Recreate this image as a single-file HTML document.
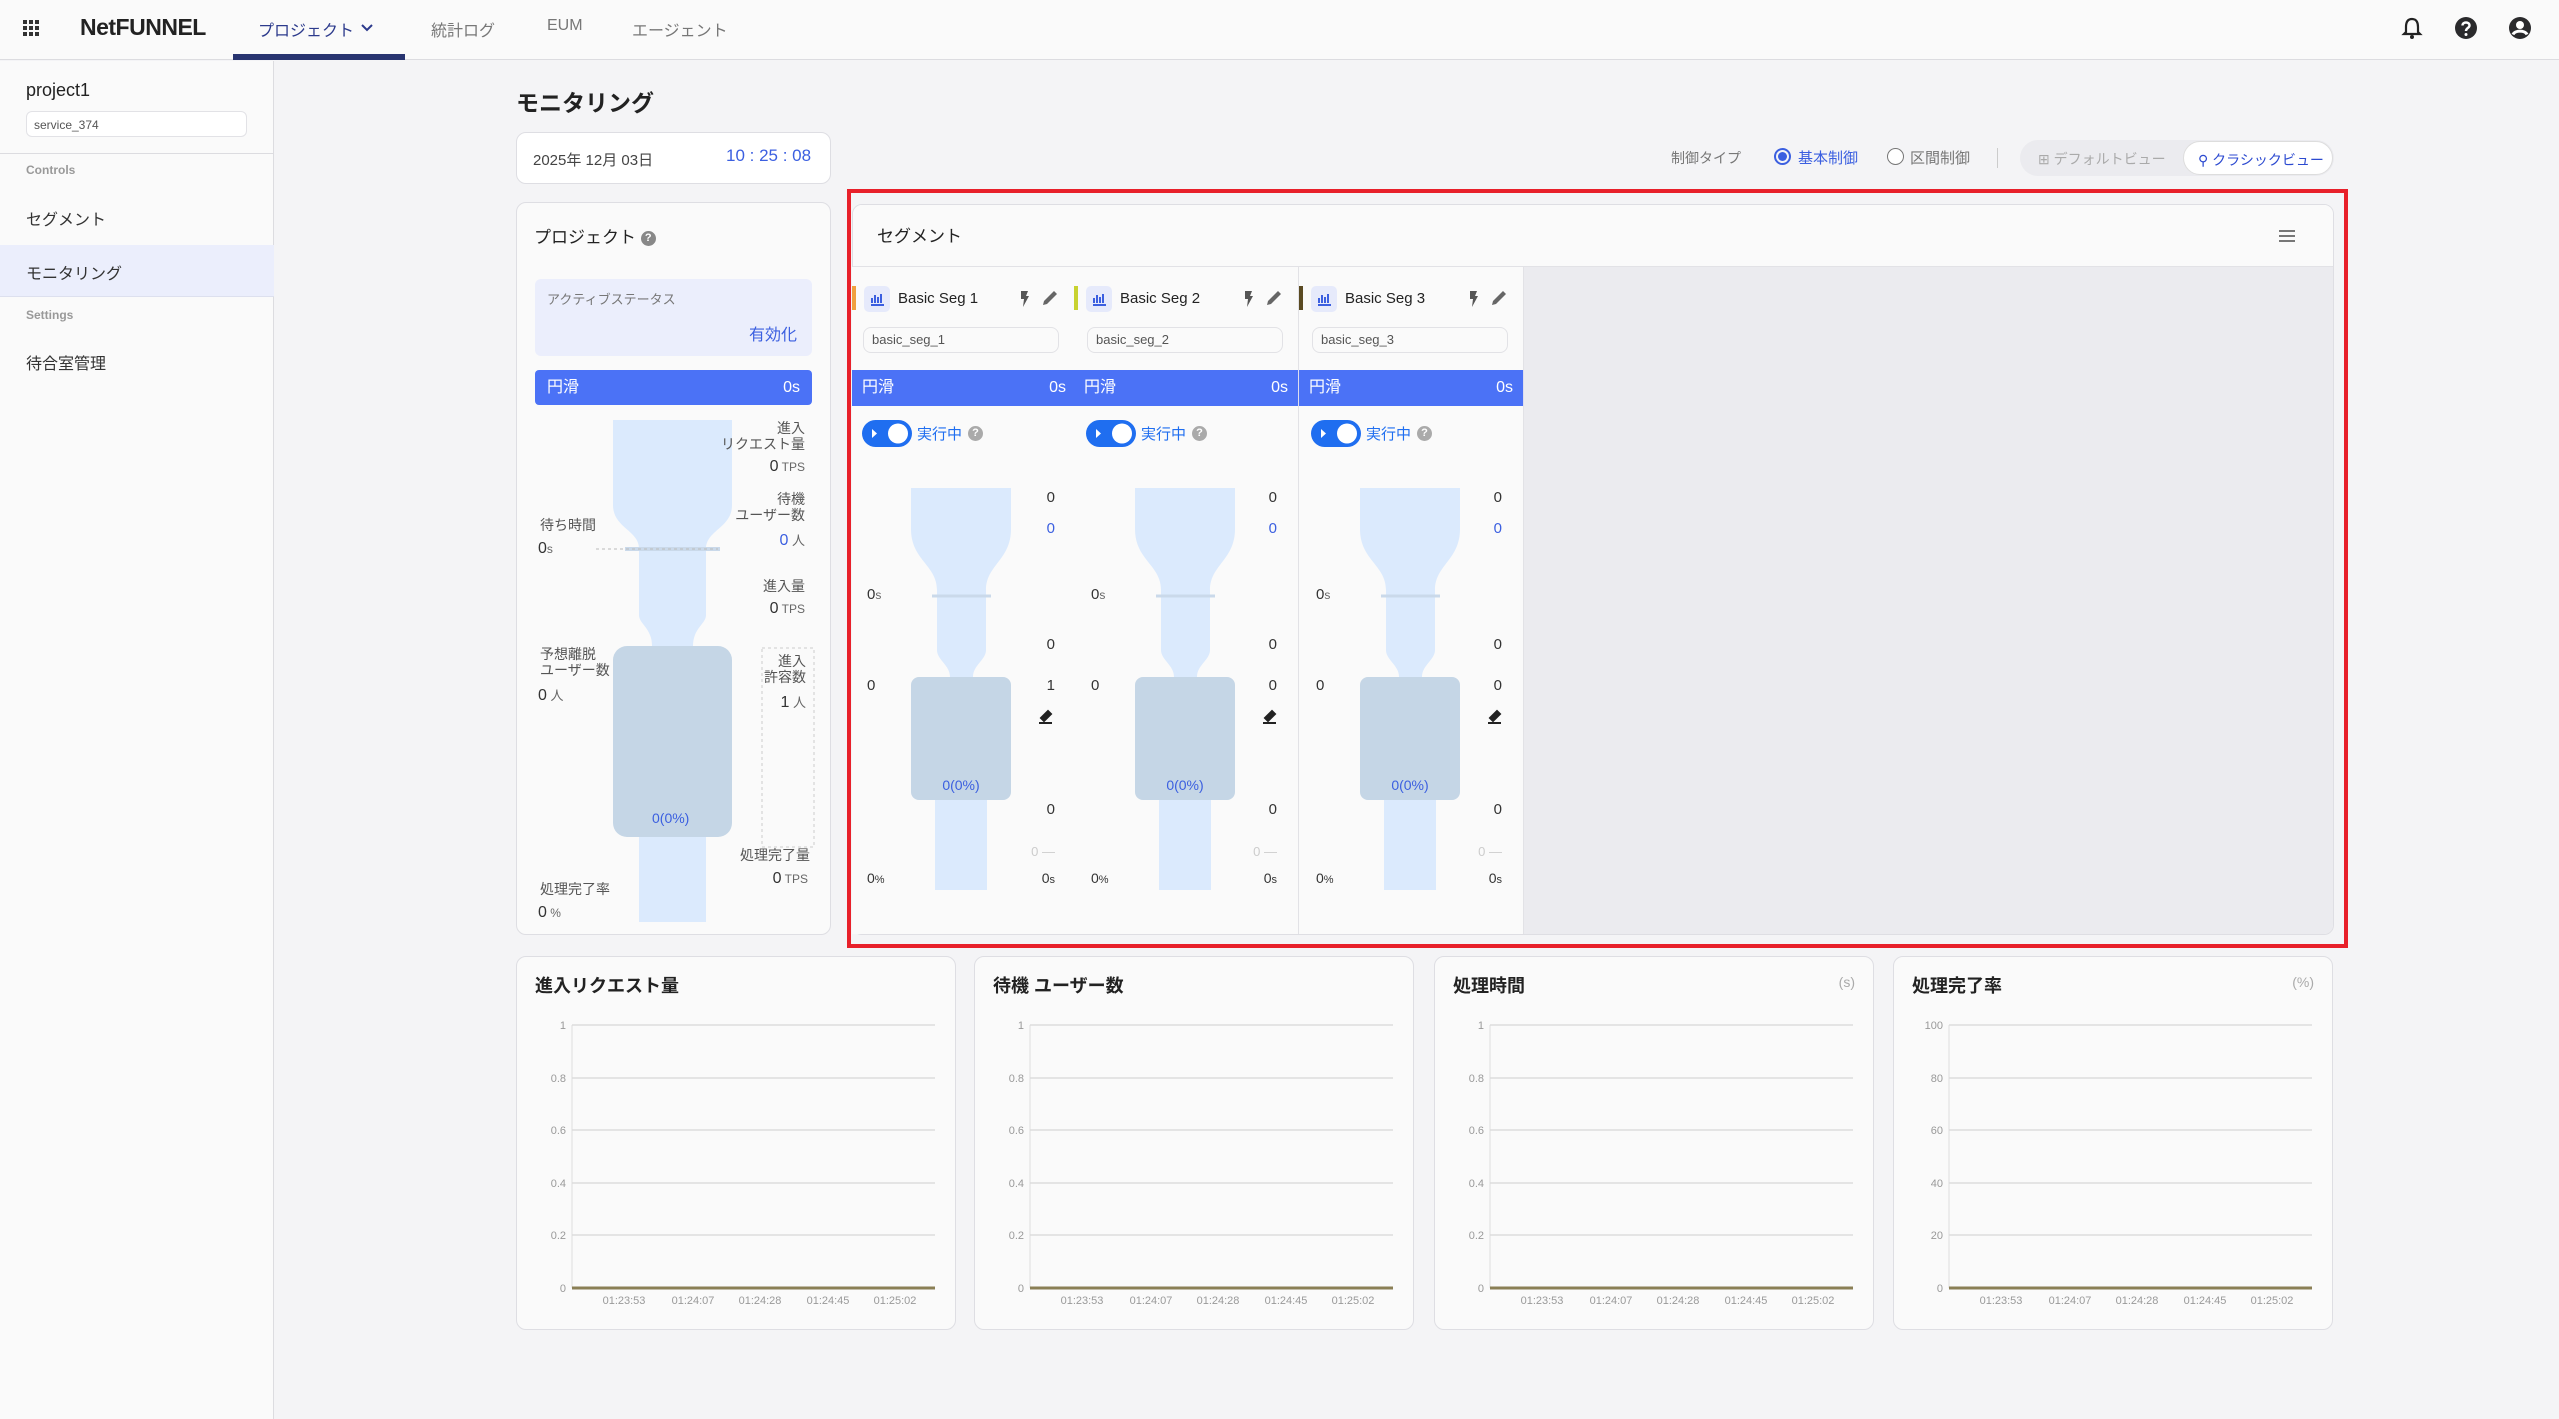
<!DOCTYPE html>
<html><head><meta charset="utf-8">
<style>
*{margin:0;padding:0;box-sizing:border-box}
body{width:2559px;height:1419px;overflow:hidden;background:#f4f4f6;font-family:"Liberation Sans","Noto Sans CJK JP",sans-serif;color:#333;position:relative}
.a{position:absolute;white-space:nowrap}
.r{text-align:right}
.blue{color:#3b5fe0}
.g{color:#777}
.card{position:absolute;background:#fafafa;border:1px solid #dedee3;border-radius:10px}
.bar{position:absolute;background:#4b72f6;color:#fff;font-size:16px;line-height:35px}
.lbl{font-size:14px;color:#555;line-height:16px}
.ct{font-size:11px;color:#999}
</style></head><body>
<!-- header -->
<div class="a" style="left:0;top:0;width:2559px;height:60px;background:#fafafa;border-bottom:1px solid #dcdce0"></div>
<svg class="a" style="left:23px;top:20px" width="17" height="17" viewBox="0 0 17 17" fill="#333"><rect x="0" y="0" width="4" height="4"/><rect x="6" y="0" width="4" height="4"/><rect x="12" y="0" width="4" height="4"/><rect x="0" y="6" width="4" height="4"/><rect x="6" y="6" width="4" height="4"/><rect x="12" y="6" width="4" height="4"/><rect x="0" y="12" width="4" height="4"/><rect x="6" y="12" width="4" height="4"/><rect x="12" y="12" width="4" height="4"/></svg>
<div class="a" style="left:80px;top:14px;font-size:23px;font-weight:bold;color:#222;letter-spacing:-0.5px">NetFUNNEL</div>
<div class="a" style="left:258px;top:17px;font-size:16px;color:#2c3a8c">プロジェクト</div>
<svg class="a" style="left:360px;top:23px" width="14" height="10" viewBox="0 0 14 10"><path d="M2 2 L7 7 L12 2" stroke="#2c3a8c" stroke-width="2" fill="none"/></svg>
<div class="a" style="left:233px;top:54px;width:172px;height:6px;background:#283470"></div>
<div class="a g" style="left:431px;top:17px;font-size:16px">統計ログ</div>
<div class="a g" style="left:547px;top:17px;font-size:16px">EUM</div>
<div class="a g" style="left:632px;top:17px;font-size:16px">エージェント</div>
<svg class="a" style="left:2401px;top:16px" width="22" height="24" viewBox="0 0 22 24"><path d="M11 3 C6 3 5 7 5 11 V16 L3 18 H19 L17 16 V11 C17 7 16 3 11 3Z" fill="none" stroke="#222" stroke-width="2.2"/><circle cx="11" cy="21" r="2" fill="#222"/></svg>
<svg class="a" style="left:2454px;top:16px" width="24" height="24" viewBox="0 0 24 24"><circle cx="12" cy="12" r="11" fill="#2a2a2c"/><path d="M8.5 9.5 C8.5 5.5 15.5 5.5 15.5 9.5 C15.5 12 12 12 12 15" stroke="#fff" stroke-width="2.4" fill="none"/><circle cx="12" cy="18.5" r="1.5" fill="#fff"/></svg>
<svg class="a" style="left:2508px;top:16px" width="24" height="24" viewBox="0 0 24 24"><circle cx="12" cy="12" r="11" fill="#2a2a2c"/><circle cx="12" cy="9" r="4" fill="#fff"/><path d="M5 18.5 C7 14 17 14 19 18.5" stroke="#fff" stroke-width="3" fill="none"/></svg>
<!-- sidebar -->
<div class="a" style="left:0;top:61px;width:274px;height:1358px;background:#fafafa;border-right:1px solid #dcdce0"></div>
<div class="a" style="left:26px;top:80px;font-size:18px;color:#222">project1</div>
<div class="a" style="left:26px;top:111px;width:221px;height:26px;border:1px solid #e2e2e6;border-radius:6px;background:#fff;font-size:12px;color:#555;padding:6px 7px">service_374</div>
<div class="a" style="left:0;top:153px;width:274px;height:1px;background:#dcdce0"></div>
<div class="a" style="left:26px;top:163px;font-size:12px;color:#999;font-weight:bold">Controls</div>
<div class="a" style="left:26px;top:206px;font-size:16px;color:#333">セグメント</div>
<div class="a" style="left:0;top:245px;width:274px;height:52px;background:#ebeefc;border-bottom:1px solid #dde0ee"></div>
<div class="a" style="left:26px;top:260px;font-size:16px;color:#333">モニタリング</div>
<div class="a" style="left:26px;top:308px;font-size:12px;color:#999;font-weight:bold">Settings</div>
<div class="a" style="left:26px;top:350px;font-size:16px;color:#333">待合室管理</div>
<!-- title -->
<div class="a" style="left:516px;top:84px;font-size:23px;font-weight:bold;color:#222">モニタリング</div>
<div class="card" style="left:516px;top:132px;width:315px;height:52px;background:#fff"></div>
<div class="a" style="left:533px;top:149px;font-size:15px;color:#444">2025年 12月 03日</div>
<div class="a blue" style="left:726px;top:146px;font-size:17px">10 : 25 : 08</div>
<!-- controls -->
<div class="a g" style="left:1671px;top:148px;font-size:14px">制御タイプ</div>
<div class="a" style="left:1774px;top:148px;width:17px;height:17px;border:2px solid #3b5fe0;border-radius:50%"><div style="margin:2px;width:9px;height:9px;border-radius:50%;background:#3b5fe0"></div></div>
<div class="a blue" style="left:1798px;top:147px;font-size:15px">基本制御</div>
<div class="a" style="left:1887px;top:148px;width:17px;height:17px;border:1.5px solid #777;border-radius:50%;background:#fff"></div>
<div class="a g" style="left:1910px;top:147px;font-size:15px">区間制御</div>
<div class="a" style="left:1997px;top:148px;width:1px;height:20px;background:#ccc"></div>
<div class="a" style="left:2020px;top:140px;width:314px;height:36px;background:#ebebef;border-radius:18px"></div>
<div class="a" style="left:2038px;top:149px;font-size:14px;color:#aaa">⊞ デフォルトビュー</div>
<div class="a" style="left:2183px;top:141px;width:150px;height:34px;background:#fff;border:1px solid #ddd;border-radius:17px;font-size:14px;color:#2c4ad0;padding:8px 0 0 14px">⚲ クラシックビュー</div>
<!-- project card -->
<div class="card" style="left:516px;top:202px;width:315px;height:733px"></div>
<div class="a" style="left:534px;top:223px;font-size:17px;color:#222">プロジェクト <span style="display:inline-block;width:15px;height:15px;border-radius:50%;background:#888;color:#fff;font-size:11px;text-align:center;line-height:15px;font-weight:bold;vertical-align:2px">?</span></div>
<div class="a" style="left:535px;top:279px;width:277px;height:77px;background:#ebeefc;border-radius:6px"></div>
<div class="a lbl" style="left:547px;top:292px;font-size:13px;color:#777">アクティブステータス</div>
<div class="a blue" style="left:749px;top:321px;font-size:16px">有効化</div>
<div class="bar" style="left:535px;top:370px;width:277px;height:35px;border-radius:4px;padding:0 12px">円滑<span style="float:right">0s</span></div>
<svg class="a" style="left:0;top:0" width="840" height="940">
<path d="M613 420 H732 V505 C732 528 706 530 706 549 V615 C706 624 693 628 693 646 H652 C652 628 639 624 639 615 V549 C639 530 613 528 613 505 Z" fill="#dbeafd"/>
<line x1="625" y1="549" x2="720" y2="549" stroke="#cad9ea" stroke-width="4"/>
<line x1="596" y1="549" x2="718" y2="549" stroke="#bbb" stroke-width="1" stroke-dasharray="3 3"/>
<rect x="613" y="646" width="119" height="191" rx="14" fill="#c5d6e6"/>
<rect x="639" y="837" width="67" height="85" fill="#dbeafd"/>
<rect x="762" y="648" width="52" height="199" fill="none" stroke="#ccc" stroke-dasharray="3 3"/>
</svg>
<div class="a lbl r" style="left:700px;top:420px;width:105px">進入<br>リクエスト量</div>
<div class="a r" style="left:700px;top:458px;width:105px;font-size:16px;color:#333">0<span style="font-size:12px;color:#666"> TPS</span></div>
<div class="a lbl r" style="left:700px;top:491px;width:105px">待機<br>ユーザー数</div>
<div class="a r blue" style="left:700px;top:530px;width:105px;font-size:16px">0<span style="font-size:13px;color:#666"> 人</span></div>
<div class="a lbl" style="left:540px;top:517px">待ち時間</div>
<div class="a" style="left:538px;top:540px;font-size:16px">0<span style="font-size:12px;color:#666">s</span></div>
<div class="a lbl r" style="left:700px;top:578px;width:105px">進入量</div>
<div class="a r" style="left:700px;top:600px;width:105px;font-size:16px">0<span style="font-size:12px;color:#666"> TPS</span></div>
<div class="a lbl" style="left:540px;top:646px">予想離脱<br>ユーザー数</div>
<div class="a" style="left:538px;top:685px;font-size:16px">0<span style="font-size:13px;color:#666"> 人</span></div>
<div class="a lbl r" style="left:740px;top:653px;width:66px">進入<br>許容数</div>
<div class="a r" style="left:740px;top:692px;width:66px;font-size:16px">1<span style="font-size:13px;color:#666"> 人</span></div>
<div class="a blue" style="left:652px;top:810px;font-size:14px">0(0%)</div>
<div class="a lbl r" style="left:700px;top:847px;width:110px">処理完了量</div>
<div class="a r" style="left:700px;top:870px;width:108px;font-size:16px">0<span style="font-size:12px;color:#666"> TPS</span></div>
<div class="a lbl" style="left:540px;top:881px">処理完了率</div>
<div class="a" style="left:538px;top:904px;font-size:16px">0<span style="font-size:12px;color:#666"> %</span></div>
<!-- segment card -->
<div class="card" style="left:852px;top:204px;width:1482px;height:731px;overflow:hidden">
<div class="a" style="left:0;top:0;width:1482px;height:62px;background:#fafafa;border-bottom:1px solid #e2e2e6"></div>
<div class="a" style="left:24px;top:17px;font-size:17px;color:#222">セグメント</div>
<div class="a" style="left:1426px;top:25px;width:16px;height:2px;background:#777;box-shadow:0 5px 0 #777,0 10px 0 #777"></div>
<div class="a" style="left:671px;top:62px;width:811px;height:669px;background:#ebebef"></div>
</div>
<style>
.col{position:absolute;top:0;height:935px;width:225px}
.col .bg{position:absolute;left:0;top:267px;width:100%;height:667px;background:#fafafa;border-right:1px solid #e2e2e6}
.col .stripe{position:absolute;left:0;top:286px;width:4px;height:24px}
.col .ic{position:absolute;left:12px;top:286px;width:26px;height:26px;background:#e6eafb;border-radius:5px}
.col .tt{position:absolute;left:46px;top:290px;font-size:15px;color:#222}
.col .inp{position:absolute;left:11px;top:327px;width:196px;height:26px;border:1px solid #e2e2e6;border-radius:8px;background:#fafafa;font-size:13px;color:#555;padding:4px 8px}
.col .bb{position:absolute;left:0;top:370px;width:100%;height:36px;background:#4b72f6;color:#fff;font-size:16px;line-height:36px;padding:0 10px;border-right:1px solid #dde}
.col .tg{position:absolute;left:10px;top:420px;width:50px;height:27px;border-radius:14px;background:#1f6ef0}
.col .v{position:absolute;font-size:15px;color:#333}
.col .rv{position:absolute;right:22px;font-size:15px;color:#333;text-align:right}
</style>
<div class="col" style="left:852px">
<div class="bg"></div><div class="stripe" style="background:#f0a040"></div>
<div class="ic"><svg width="26" height="26"><path d="M7 19 H20 M8 17 V12 M11 17 V9 M14 17 V11 M17 17 V8" stroke="#3b5fe0" stroke-width="2"/></svg></div>
<div class="tt">Basic Seg 1</div>
<svg class="a" style="left:166px;top:290px" width="40" height="18"><path d="M3 1 H10 L8 6 H11 L5 17 L6 9 H3Z" fill="#555"/><path d="M29 14 L39 4 L36 1 L26 11 L25 15Z" fill="#666"/></svg>
<div class="inp">basic_seg_1</div>
<div class="bb">円滑<span style="float:right">0s</span></div>
<div class="tg"><svg width="50" height="27"><path d="M10 9 L15 13.5 L10 18Z" fill="#fff"/><circle cx="36" cy="13.5" r="10" fill="#fff"/></svg></div>
<div class="a blue" style="left:65px;top:423px;font-size:15px;color:#1f6ef0">実行中</div>
<div class="a" style="left:116px;top:426px;width:15px;height:15px;border-radius:50%;background:#aaa;color:#fff;font-size:11px;text-align:center;line-height:15px;font-weight:bold">?</div>
<svg class="a" style="left:0;top:0" width="225" height="935">
<path d="M59 488 H159 V529 C159 560 134 565 134 590 V650 C134 660 121 665 121 677 H98 C98 665 85 660 85 650 V590 C85 565 59 560 59 529 Z" fill="#dbeafd"/>
<line x1="80" y1="596" x2="139" y2="596" stroke="#cad9ea" stroke-width="3"/>
<rect x="59" y="677" width="100" height="123" rx="8" fill="#c5d6e6"/>
<rect x="83" y="800" width="52" height="90" fill="#dbeafd"/>
<path d="M189 718 L196 711 L199 714 L192 721Z M187 723 H200" stroke="#222" stroke-width="2" fill="#222"/>
</svg>
<div class="rv" style="top:489px">0</div><div class="rv blue" style="top:520px;color:#3b5fe0">0</div>
<div class="v" style="left:15px;top:586px">0<span style="font-size:12px;color:#666">s</span></div>
<div class="rv" style="top:636px">0</div><div class="v" style="left:15px;top:677px">0</div><div class="rv" style="top:677px">1</div>
<div class="a" style="left:0;top:777px;width:218px;text-align:center;font-size:14px;color:#3b5fe0">0(0%)</div>
<div class="rv" style="top:801px">0</div><div class="rv" style="top:844px;color:#ccc;font-size:13px">0 —</div>
<div class="v" style="left:15px;top:870px;font-size:14px">0<span style="font-size:11px">%</span></div><div class="rv" style="top:870px;font-size:14px">0<span style="font-size:11px">s</span></div>
</div>
<div class="col" style="left:1074px">
<div class="bg"></div><div class="stripe" style="background:#c8d230"></div>
<div class="ic"><svg width="26" height="26"><path d="M7 19 H20 M8 17 V12 M11 17 V9 M14 17 V11 M17 17 V8" stroke="#3b5fe0" stroke-width="2"/></svg></div>
<div class="tt">Basic Seg 2</div>
<svg class="a" style="left:168px;top:290px" width="40" height="18"><path d="M3 1 H10 L8 6 H11 L5 17 L6 9 H3Z" fill="#555"/><path d="M29 14 L39 4 L36 1 L26 11 L25 15Z" fill="#666"/></svg>
<div class="inp" style="left:13px">basic_seg_2</div>
<div class="bb">円滑<span style="float:right">0s</span></div>
<div class="tg" style="left:12px"><svg width="50" height="27"><path d="M10 9 L15 13.5 L10 18Z" fill="#fff"/><circle cx="36" cy="13.5" r="10" fill="#fff"/></svg></div>
<div class="a" style="left:67px;top:423px;font-size:15px;color:#1f6ef0">実行中</div>
<div class="a" style="left:118px;top:426px;width:15px;height:15px;border-radius:50%;background:#aaa;color:#fff;font-size:11px;text-align:center;line-height:15px;font-weight:bold">?</div>
<svg class="a" style="left:2px;top:0" width="225" height="935">
<path d="M59 488 H159 V529 C159 560 134 565 134 590 V650 C134 660 121 665 121 677 H98 C98 665 85 660 85 650 V590 C85 565 59 560 59 529 Z" fill="#dbeafd"/>
<line x1="80" y1="596" x2="139" y2="596" stroke="#cad9ea" stroke-width="3"/>
<rect x="59" y="677" width="100" height="123" rx="8" fill="#c5d6e6"/>
<rect x="83" y="800" width="52" height="90" fill="#dbeafd"/>
<path d="M189 718 L196 711 L199 714 L192 721Z M187 723 H200" stroke="#222" stroke-width="2" fill="#222"/>
</svg>
<div class="rv" style="top:489px">0</div><div class="rv" style="top:520px;color:#3b5fe0">0</div>
<div class="v" style="left:17px;top:586px">0<span style="font-size:12px;color:#666">s</span></div>
<div class="rv" style="top:636px">0</div><div class="v" style="left:17px;top:677px">0</div><div class="rv" style="top:677px">0</div>
<div class="a" style="left:2px;top:777px;width:218px;text-align:center;font-size:14px;color:#3b5fe0">0(0%)</div>
<div class="rv" style="top:801px">0</div><div class="rv" style="top:844px;color:#ccc;font-size:13px">0 —</div>
<div class="v" style="left:17px;top:870px;font-size:14px">0<span style="font-size:11px">%</span></div><div class="rv" style="top:870px;font-size:14px">0<span style="font-size:11px">s</span></div>
</div>
<div class="col" style="left:1299px">
<div class="bg"></div><div class="stripe" style="background:#5a4a22"></div>
<div class="ic"><svg width="26" height="26"><path d="M7 19 H20 M8 17 V12 M11 17 V9 M14 17 V11 M17 17 V8" stroke="#3b5fe0" stroke-width="2"/></svg></div>
<div class="tt">Basic Seg 3</div>
<svg class="a" style="left:168px;top:290px" width="40" height="18"><path d="M3 1 H10 L8 6 H11 L5 17 L6 9 H3Z" fill="#555"/><path d="M29 14 L39 4 L36 1 L26 11 L25 15Z" fill="#666"/></svg>
<div class="inp" style="left:13px">basic_seg_3</div>
<div class="bb">円滑<span style="float:right">0s</span></div>
<div class="tg" style="left:12px"><svg width="50" height="27"><path d="M10 9 L15 13.5 L10 18Z" fill="#fff"/><circle cx="36" cy="13.5" r="10" fill="#fff"/></svg></div>
<div class="a" style="left:67px;top:423px;font-size:15px;color:#1f6ef0">実行中</div>
<div class="a" style="left:118px;top:426px;width:15px;height:15px;border-radius:50%;background:#aaa;color:#fff;font-size:11px;text-align:center;line-height:15px;font-weight:bold">?</div>
<svg class="a" style="left:2px;top:0" width="225" height="935">
<path d="M59 488 H159 V529 C159 560 134 565 134 590 V650 C134 660 121 665 121 677 H98 C98 665 85 660 85 650 V590 C85 565 59 560 59 529 Z" fill="#dbeafd"/>
<line x1="80" y1="596" x2="139" y2="596" stroke="#cad9ea" stroke-width="3"/>
<rect x="59" y="677" width="100" height="123" rx="8" fill="#c5d6e6"/>
<rect x="83" y="800" width="52" height="90" fill="#dbeafd"/>
<path d="M189 718 L196 711 L199 714 L192 721Z M187 723 H200" stroke="#222" stroke-width="2" fill="#222"/>
</svg>
<div class="rv" style="top:489px">0</div><div class="rv" style="top:520px;color:#3b5fe0">0</div>
<div class="v" style="left:17px;top:586px">0<span style="font-size:12px;color:#666">s</span></div>
<div class="rv" style="top:636px">0</div><div class="v" style="left:17px;top:677px">0</div><div class="rv" style="top:677px">0</div>
<div class="a" style="left:2px;top:777px;width:218px;text-align:center;font-size:14px;color:#3b5fe0">0(0%)</div>
<div class="rv" style="top:801px">0</div><div class="rv" style="top:844px;color:#ccc;font-size:13px">0 —</div>
<div class="v" style="left:17px;top:870px;font-size:14px">0<span style="font-size:11px">%</span></div><div class="rv" style="top:870px;font-size:14px">0<span style="font-size:11px">s</span></div>
</div>
<!-- red box -->
<div class="a" style="left:847px;top:189px;width:1501px;height:759px;border:4px solid #e8202a"></div>
<!-- charts -->
<style>
.ch{position:absolute;top:956px;width:440px;height:374px;background:#fafafa;border:1px solid #dedee3;border-radius:10px}
.ch .t{position:absolute;left:18px;top:15px;font-size:18px;font-weight:bold;color:#222}
.ch .u{position:absolute;right:18px;top:17px;font-size:14px;color:#aaa}
</style>
<div class="ch" style="left:516px"><div class="t">進入リクエスト量</div>
<svg class="a" style="left:0;top:0" width="440" height="374"><g stroke="#e4e4e4" stroke-width="2"><line x1="55" y1="68" x2="418" y2="68"/><line x1="55" y1="121" x2="418" y2="121"/><line x1="55" y1="173" x2="418" y2="173"/><line x1="55" y1="226" x2="418" y2="226"/><line x1="55" y1="278" x2="418" y2="278"/></g><line x1="55" y1="68" x2="55" y2="331" stroke="#ddd"/><line x1="55" y1="331" x2="418" y2="331" stroke="#8a7f55" stroke-width="3"/>
<g font-family="Liberation Sans" font-size="11" fill="#999" text-anchor="end"><text x="49" y="72">1</text><text x="49" y="125">0.8</text><text x="49" y="177">0.6</text><text x="49" y="230">0.4</text><text x="49" y="282">0.2</text><text x="49" y="335">0</text></g>
<g font-family="Liberation Sans" font-size="11" fill="#999" text-anchor="middle"><text x="107" y="347">01:23:53</text><text x="176" y="347">01:24:07</text><text x="243" y="347">01:24:28</text><text x="311" y="347">01:24:45</text><text x="378" y="347">01:25:02</text></g></svg></div>
<div class="ch" style="left:974px"><div class="t">待機 ユーザー数</div>
<svg class="a" style="left:0;top:0" width="440" height="374"><g stroke="#e4e4e4" stroke-width="2"><line x1="55" y1="68" x2="418" y2="68"/><line x1="55" y1="121" x2="418" y2="121"/><line x1="55" y1="173" x2="418" y2="173"/><line x1="55" y1="226" x2="418" y2="226"/><line x1="55" y1="278" x2="418" y2="278"/></g><line x1="55" y1="68" x2="55" y2="331" stroke="#ddd"/><line x1="55" y1="331" x2="418" y2="331" stroke="#8a7f55" stroke-width="3"/>
<g font-family="Liberation Sans" font-size="11" fill="#999" text-anchor="end"><text x="49" y="72">1</text><text x="49" y="125">0.8</text><text x="49" y="177">0.6</text><text x="49" y="230">0.4</text><text x="49" y="282">0.2</text><text x="49" y="335">0</text></g>
<g font-family="Liberation Sans" font-size="11" fill="#999" text-anchor="middle"><text x="107" y="347">01:23:53</text><text x="176" y="347">01:24:07</text><text x="243" y="347">01:24:28</text><text x="311" y="347">01:24:45</text><text x="378" y="347">01:25:02</text></g></svg></div>
<div class="ch" style="left:1434px"><div class="t">処理時間</div><div class="u">(s)</div>
<svg class="a" style="left:0;top:0" width="440" height="374"><g stroke="#e4e4e4" stroke-width="2"><line x1="55" y1="68" x2="418" y2="68"/><line x1="55" y1="121" x2="418" y2="121"/><line x1="55" y1="173" x2="418" y2="173"/><line x1="55" y1="226" x2="418" y2="226"/><line x1="55" y1="278" x2="418" y2="278"/></g><line x1="55" y1="68" x2="55" y2="331" stroke="#ddd"/><line x1="55" y1="331" x2="418" y2="331" stroke="#8a7f55" stroke-width="3"/>
<g font-family="Liberation Sans" font-size="11" fill="#999" text-anchor="end"><text x="49" y="72">1</text><text x="49" y="125">0.8</text><text x="49" y="177">0.6</text><text x="49" y="230">0.4</text><text x="49" y="282">0.2</text><text x="49" y="335">0</text></g>
<g font-family="Liberation Sans" font-size="11" fill="#999" text-anchor="middle"><text x="107" y="347">01:23:53</text><text x="176" y="347">01:24:07</text><text x="243" y="347">01:24:28</text><text x="311" y="347">01:24:45</text><text x="378" y="347">01:25:02</text></g></svg></div>
<div class="ch" style="left:1893px"><div class="t">処理完了率</div><div class="u">(%)</div>
<svg class="a" style="left:0;top:0" width="440" height="374"><g stroke="#e4e4e4" stroke-width="2"><line x1="55" y1="68" x2="418" y2="68"/><line x1="55" y1="121" x2="418" y2="121"/><line x1="55" y1="173" x2="418" y2="173"/><line x1="55" y1="226" x2="418" y2="226"/><line x1="55" y1="278" x2="418" y2="278"/></g><line x1="55" y1="68" x2="55" y2="331" stroke="#ddd"/><line x1="55" y1="331" x2="418" y2="331" stroke="#8a7f55" stroke-width="3"/>
<g font-family="Liberation Sans" font-size="11" fill="#999" text-anchor="end"><text x="49" y="72">100</text><text x="49" y="125">80</text><text x="49" y="177">60</text><text x="49" y="230">40</text><text x="49" y="282">20</text><text x="49" y="335">0</text></g>
<g font-family="Liberation Sans" font-size="11" fill="#999" text-anchor="middle"><text x="107" y="347">01:23:53</text><text x="176" y="347">01:24:07</text><text x="243" y="347">01:24:28</text><text x="311" y="347">01:24:45</text><text x="378" y="347">01:25:02</text></g></svg></div>
</body></html>
